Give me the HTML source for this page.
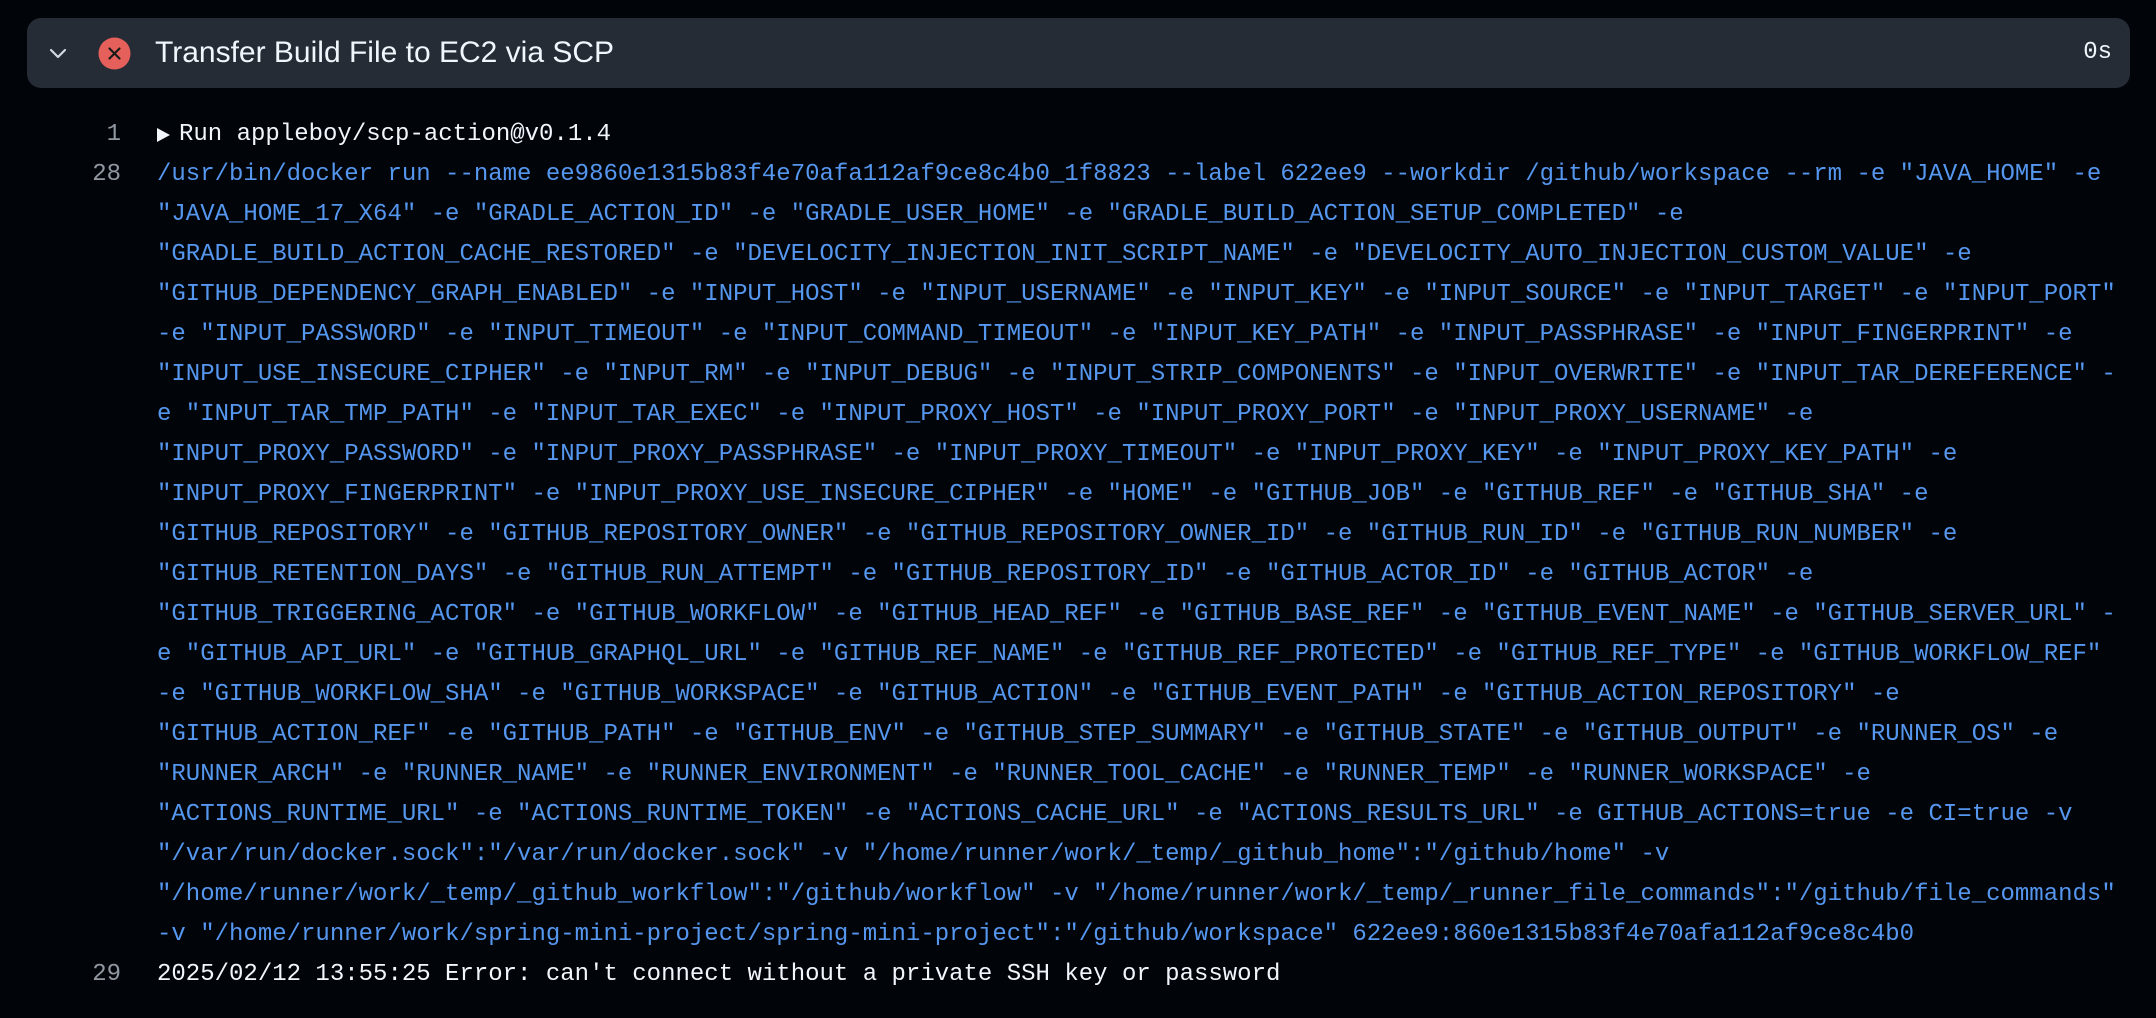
<!DOCTYPE html>
<html><head><meta charset="utf-8"><style>
html,body{margin:0;padding:0;background:#010409;width:2156px;height:1018px;overflow:hidden}
.hdr{position:absolute;left:27px;top:18px;width:2103px;height:70px;background:#262c36;border-radius:14px}
.title{position:absolute;left:128px;top:0;line-height:70px;font-family:"Liberation Sans",sans-serif;font-size:30px;color:#f0f6fc}
.dur{position:absolute;right:18px;top:0;line-height:70px;font-family:"Liberation Mono",monospace;font-size:24px;color:#f0f6fc}
.log{position:absolute;left:0;top:115px;font-family:"Liberation Mono",monospace;font-size:24px;line-height:40px}
.row{position:relative;height:40px;white-space:pre}
.n{position:absolute;left:0;width:121px;text-align:right;color:#9198a1}
.t{position:absolute;left:157px;color:#f0f6fc}
.b{color:#5596ee}
</style></head><body>
<div class="hdr">
<svg style="position:absolute;left:21px;top:25px" width="20" height="20" viewBox="0 0 20 20"><path d="M3 7l7 7 7-7" fill="none" stroke="#d1d7e0" stroke-width="2.2" stroke-linecap="round" stroke-linejoin="round"/></svg>
<svg style="position:absolute;left:71px;top:19px" width="33" height="33" viewBox="0 0 33 33"><circle cx="16.5" cy="16.5" r="16" fill="#e5605a"/><path d="M11.5 11.5l10 10M21.5 11.5l-10 10" stroke="#1a1a1a" stroke-width="2.2" stroke-linecap="round"/></svg>
<div class="title">Transfer Build File to EC2 via SCP</div>
<div class="dur">0s</div>
</div>
<div class="log">
<div class="row"><span class="n">1</span><span class="t"><svg width="22" height="40" viewBox="0 0 22 40" style="vertical-align:top"><path d="M0 13l13 7-13 7z" fill="#f0f6fc"/></svg>Run appleboy/scp-action@v0.1.4</span></div>
<div class="row"><span class="n">28</span><span class="t b">/usr/bin/docker run --name ee9860e1315b83f4e70afa112af9ce8c4b0_1f8823 --label 622ee9 --workdir /github/workspace --rm -e "JAVA_HOME" -e</span></div>
<div class="row"><span class="t b">"JAVA_HOME_17_X64" -e "GRADLE_ACTION_ID" -e "GRADLE_USER_HOME" -e "GRADLE_BUILD_ACTION_SETUP_COMPLETED" -e</span></div>
<div class="row"><span class="t b">"GRADLE_BUILD_ACTION_CACHE_RESTORED" -e "DEVELOCITY_INJECTION_INIT_SCRIPT_NAME" -e "DEVELOCITY_AUTO_INJECTION_CUSTOM_VALUE" -e</span></div>
<div class="row"><span class="t b">"GITHUB_DEPENDENCY_GRAPH_ENABLED" -e "INPUT_HOST" -e "INPUT_USERNAME" -e "INPUT_KEY" -e "INPUT_SOURCE" -e "INPUT_TARGET" -e "INPUT_PORT"</span></div>
<div class="row"><span class="t b">-e "INPUT_PASSWORD" -e "INPUT_TIMEOUT" -e "INPUT_COMMAND_TIMEOUT" -e "INPUT_KEY_PATH" -e "INPUT_PASSPHRASE" -e "INPUT_FINGERPRINT" -e</span></div>
<div class="row"><span class="t b">"INPUT_USE_INSECURE_CIPHER" -e "INPUT_RM" -e "INPUT_DEBUG" -e "INPUT_STRIP_COMPONENTS" -e "INPUT_OVERWRITE" -e "INPUT_TAR_DEREFERENCE" -</span></div>
<div class="row"><span class="t b">e "INPUT_TAR_TMP_PATH" -e "INPUT_TAR_EXEC" -e "INPUT_PROXY_HOST" -e "INPUT_PROXY_PORT" -e "INPUT_PROXY_USERNAME" -e</span></div>
<div class="row"><span class="t b">"INPUT_PROXY_PASSWORD" -e "INPUT_PROXY_PASSPHRASE" -e "INPUT_PROXY_TIMEOUT" -e "INPUT_PROXY_KEY" -e "INPUT_PROXY_KEY_PATH" -e</span></div>
<div class="row"><span class="t b">"INPUT_PROXY_FINGERPRINT" -e "INPUT_PROXY_USE_INSECURE_CIPHER" -e "HOME" -e "GITHUB_JOB" -e "GITHUB_REF" -e "GITHUB_SHA" -e</span></div>
<div class="row"><span class="t b">"GITHUB_REPOSITORY" -e "GITHUB_REPOSITORY_OWNER" -e "GITHUB_REPOSITORY_OWNER_ID" -e "GITHUB_RUN_ID" -e "GITHUB_RUN_NUMBER" -e</span></div>
<div class="row"><span class="t b">"GITHUB_RETENTION_DAYS" -e "GITHUB_RUN_ATTEMPT" -e "GITHUB_REPOSITORY_ID" -e "GITHUB_ACTOR_ID" -e "GITHUB_ACTOR" -e</span></div>
<div class="row"><span class="t b">"GITHUB_TRIGGERING_ACTOR" -e "GITHUB_WORKFLOW" -e "GITHUB_HEAD_REF" -e "GITHUB_BASE_REF" -e "GITHUB_EVENT_NAME" -e "GITHUB_SERVER_URL" -</span></div>
<div class="row"><span class="t b">e "GITHUB_API_URL" -e "GITHUB_GRAPHQL_URL" -e "GITHUB_REF_NAME" -e "GITHUB_REF_PROTECTED" -e "GITHUB_REF_TYPE" -e "GITHUB_WORKFLOW_REF"</span></div>
<div class="row"><span class="t b">-e "GITHUB_WORKFLOW_SHA" -e "GITHUB_WORKSPACE" -e "GITHUB_ACTION" -e "GITHUB_EVENT_PATH" -e "GITHUB_ACTION_REPOSITORY" -e</span></div>
<div class="row"><span class="t b">"GITHUB_ACTION_REF" -e "GITHUB_PATH" -e "GITHUB_ENV" -e "GITHUB_STEP_SUMMARY" -e "GITHUB_STATE" -e "GITHUB_OUTPUT" -e "RUNNER_OS" -e</span></div>
<div class="row"><span class="t b">"RUNNER_ARCH" -e "RUNNER_NAME" -e "RUNNER_ENVIRONMENT" -e "RUNNER_TOOL_CACHE" -e "RUNNER_TEMP" -e "RUNNER_WORKSPACE" -e</span></div>
<div class="row"><span class="t b">"ACTIONS_RUNTIME_URL" -e "ACTIONS_RUNTIME_TOKEN" -e "ACTIONS_CACHE_URL" -e "ACTIONS_RESULTS_URL" -e GITHUB_ACTIONS=true -e CI=true -v</span></div>
<div class="row"><span class="t b">"/var/run/docker.sock":"/var/run/docker.sock" -v "/home/runner/work/_temp/_github_home":"/github/home" -v</span></div>
<div class="row"><span class="t b">"/home/runner/work/_temp/_github_workflow":"/github/workflow" -v "/home/runner/work/_temp/_runner_file_commands":"/github/file_commands"</span></div>
<div class="row"><span class="t b">-v "/home/runner/work/spring-mini-project/spring-mini-project":"/github/workspace" 622ee9:860e1315b83f4e70afa112af9ce8c4b0</span></div>
<div class="row"><span class="n">29</span><span class="t">2025/02/12 13:55:25 Error: can't connect without a private SSH key or password</span></div>
</div>
</body></html>
